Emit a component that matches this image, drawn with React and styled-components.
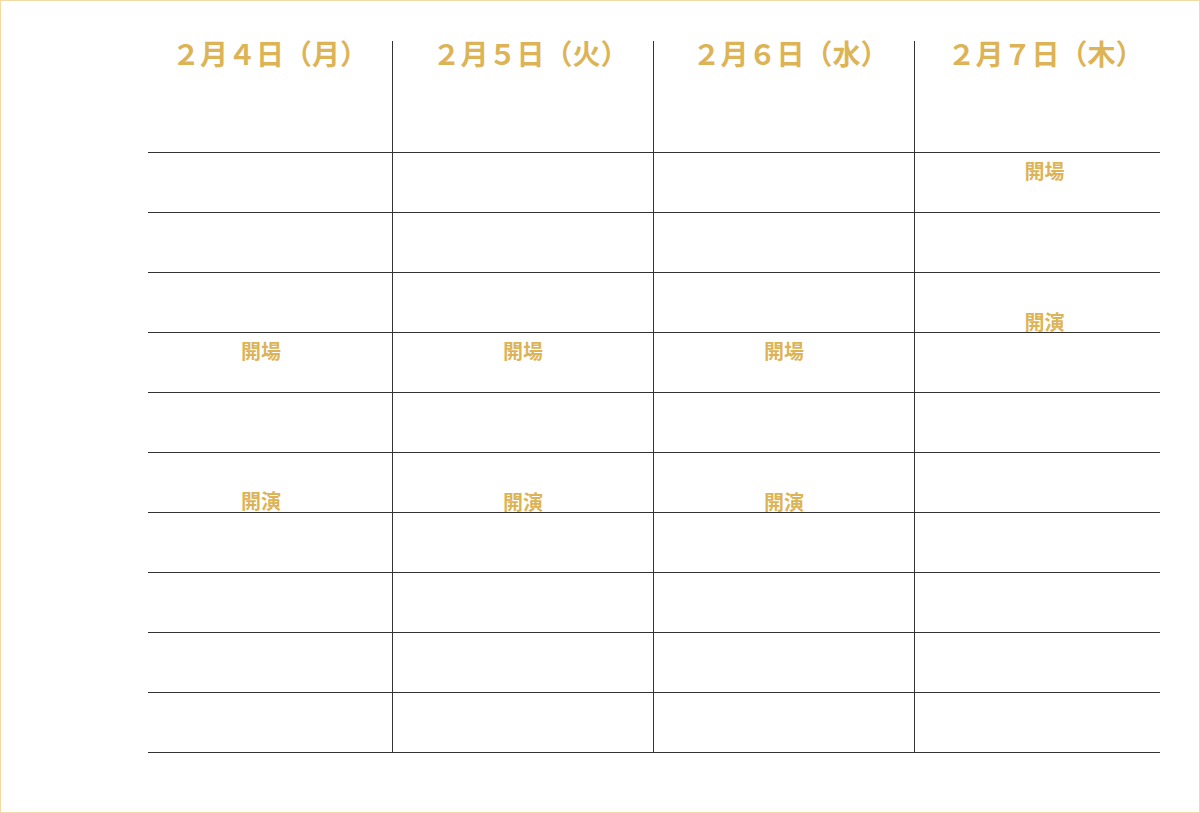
import styled, { createGlobalStyle } from 'styled-components';

const GlobalStyle = createGlobalStyle`
  body {
    margin: 0;
    background: #fff;
    font-family: "Noto Sans CJK JP", "Noto Sans", sans-serif;
  }
`;

const Frame = styled.div`
  box-sizing: border-box;
  width: 1200px;
  height: 813px;
  border: 1px solid #efdba6;
  padding: 40px 0 0 147px;
`;

const Table = styled.div`
  width: 1012px;
`;

const Row = styled.div`
  display: grid;
  grid-template-columns: 244px 261px 261px 246px;
  height: ${(p) => p.$height}px;
  border-bottom: 1px solid #333;
`;

const Cell = styled.div`
  display: flex;
  justify-content: center;
  align-items: flex-start;
  border-left: ${(p) => (p.$first ? 'none' : '1px solid #333')};
  padding-right: ${(p) => (p.$first ? '18px' : '0')};
  padding-left: ${(p) => (p.$last ? '14px' : '0')};
`;

const HeadCell = styled.div`
  display: flex;
  justify-content: center;
  align-items: flex-start;
  border-left: ${(p) => (p.$first ? 'none' : '1px solid #333')};
  padding-left: ${(p) => p.$shift}px;
`;

const DayTitle = styled.h2`
  margin: -2px 0 0;
  font-size: 28px;
  line-height: 28px;
  font-weight: 700;
  color: #dcb457;
  white-space: nowrap;
`;

const Label = styled.span`
  margin-top: ${(p) => p.$offset}px;
  font-size: 20px;
  line-height: 20px;
  font-weight: 700;
  color: #dcb457;
`;

const days = [
  ['２月４日（月）', 0],
  ['２月５日（火）', 15],
  ['２月６日（水）', 13],
  ['２月７日（木）', 16],
];

// [row, col] -> label, top offset
const labels = {
  '3-0': ['開場', 8],
  '3-1': ['開場', 8],
  '3-2': ['開場', 8],
  '5-0': ['開演', 38],
  '5-1': ['開演', 39],
  '5-2': ['開演', 39],
  '0-3': ['開場', 8],
  '2-3': ['開演', 39],
};

export default function App() {
  return (
    <>
      <GlobalStyle />
      <Frame>
        <Table>
          <Row $height={111}>
            {days.map(([day, shift], i) => (
              <HeadCell key={day} $first={i === 0} $shift={shift}>
                <DayTitle>{day}</DayTitle>
              </HeadCell>
            ))}
          </Row>
          {Array.from({ length: 10 }).map((_, r) => (
            <Row key={r} $height={59}>
              {[0, 1, 2, 3].map((c) => {
                const label = labels[`${r}-${c}`];
                return (
                  <Cell key={c} $first={c === 0} $last={c === 3}>
                    {label ? <Label $offset={label[1]}>{label[0]}</Label> : null}
                  </Cell>
                );
              })}
            </Row>
          ))}
        </Table>
      </Frame>
    </>
  );
}
